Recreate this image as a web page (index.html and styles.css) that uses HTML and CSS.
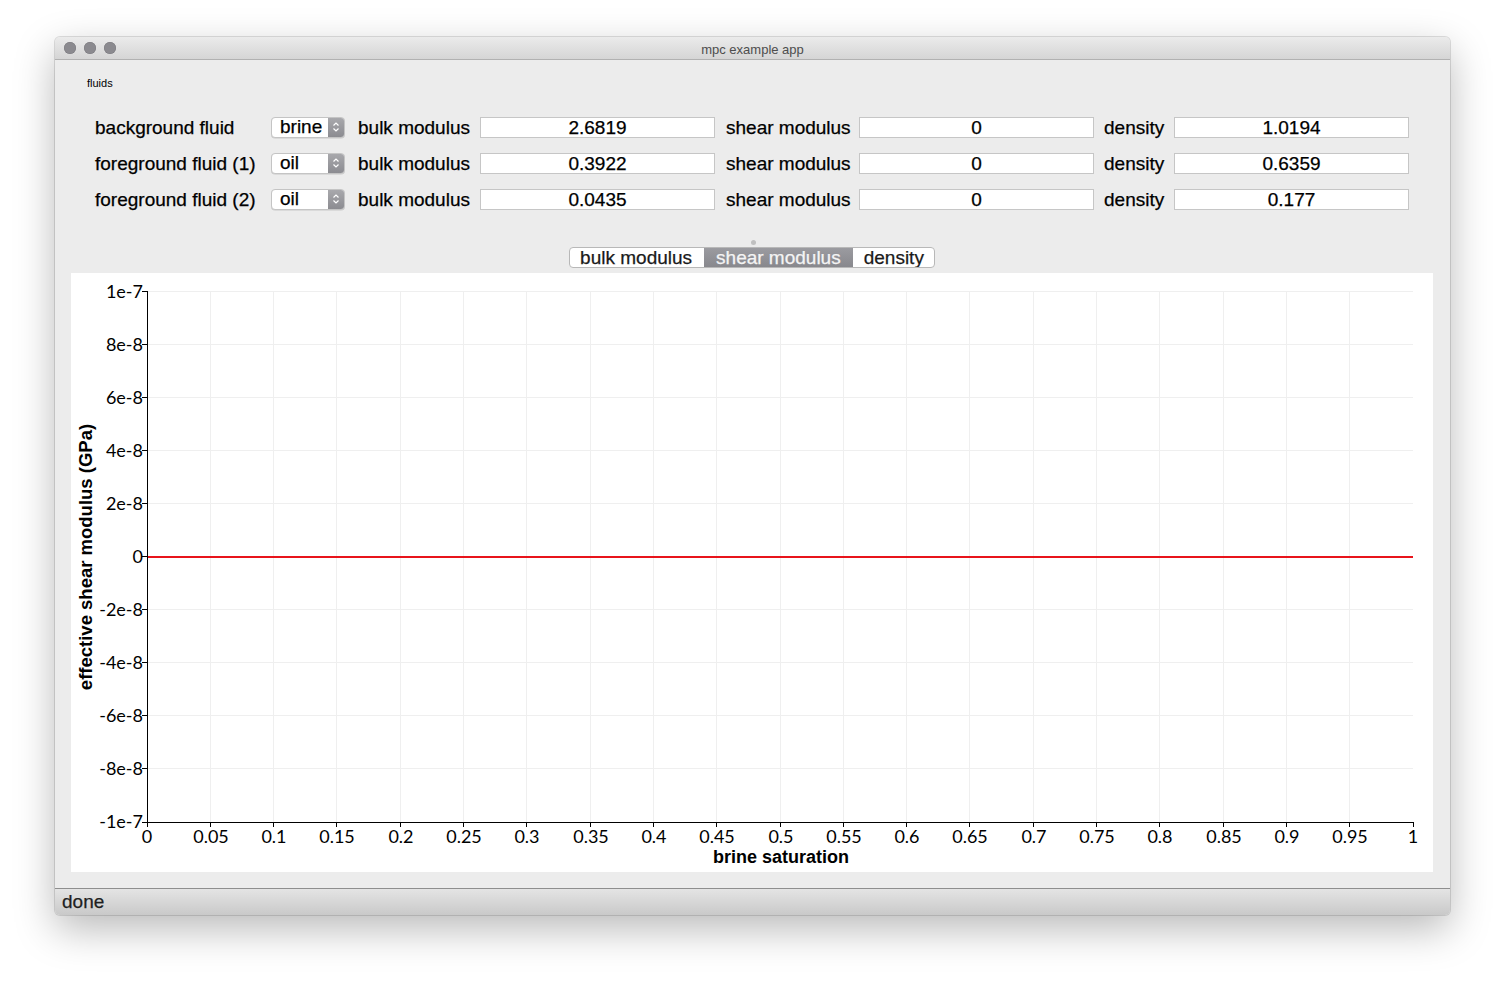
FILE: index.html
```html
<!DOCTYPE html>
<html>
<head>
<meta charset="utf-8">
<title>mpc example app</title>
<link rel="stylesheet" href="styles.css">
</head>
<body>
<div class="window">
  <div class="titlebar">
    <div class="lights"><span class="light"></span><span class="light"></span><span class="light"></span></div>
    <div class="title">mpc example app</div>
  </div>
  <div class="content">
    <div class="group-title">fluids</div>
    <div class="fluid-grid">
      <div class="lbl">background fluid</div>
      <div class="combo"><span class="combo-text">brine</span><span class="stepper"><svg width="8" height="12" viewBox="0 0 8 12"><path d="M1.5 4.5 L4 2 L6.5 4.5 M1.5 7.5 L4 10 L6.5 7.5" fill="none" stroke="#fff" stroke-width="1.2"/></svg></span></div>
      <div class="lbl pad-a">bulk modulus</div>
      <div class="field">2.6819</div>
      <div class="lbl pad-b">shear modulus</div>
      <div class="field">0</div>
      <div class="lbl pad-c">density</div>
      <div class="field">1.0194</div>

      <div class="lbl">foreground fluid (1)</div>
      <div class="combo"><span class="combo-text">oil</span><span class="stepper"><svg width="8" height="12" viewBox="0 0 8 12"><path d="M1.5 4.5 L4 2 L6.5 4.5 M1.5 7.5 L4 10 L6.5 7.5" fill="none" stroke="#fff" stroke-width="1.2"/></svg></span></div>
      <div class="lbl pad-a">bulk modulus</div>
      <div class="field">0.3922</div>
      <div class="lbl pad-b">shear modulus</div>
      <div class="field">0</div>
      <div class="lbl pad-c">density</div>
      <div class="field">0.6359</div>

      <div class="lbl">foreground fluid (2)</div>
      <div class="combo"><span class="combo-text">oil</span><span class="stepper"><svg width="8" height="12" viewBox="0 0 8 12"><path d="M1.5 4.5 L4 2 L6.5 4.5 M1.5 7.5 L4 10 L6.5 7.5" fill="none" stroke="#fff" stroke-width="1.2"/></svg></span></div>
      <div class="lbl pad-a">bulk modulus</div>
      <div class="field">0.0435</div>
      <div class="lbl pad-b">shear modulus</div>
      <div class="field">0</div>
      <div class="lbl pad-c">density</div>
      <div class="field">0.177</div>
    </div>

    <div class="splitter"><span class="handle"></span></div>
    <div class="tabs">
      <div class="tab first">bulk modulus</div>
      <div class="tab selected">shear modulus</div>
      <div class="tab">density</div>
    </div>

    <div class="plot">
      <svg class="chart" width="1362" height="599" viewBox="0 0 1362 599">
        <g class="grid" stroke="#efefef" stroke-width="1">
          <line x1="76" y1="18.5" x2="1342" y2="18.5"/>
          <line x1="76" y1="71.5" x2="1342" y2="71.5"/>
          <line x1="76" y1="124.5" x2="1342" y2="124.5"/>
          <line x1="76" y1="177.5" x2="1342" y2="177.5"/>
          <line x1="76" y1="230.5" x2="1342" y2="230.5"/>
          <line x1="76" y1="336.5" x2="1342" y2="336.5"/>
          <line x1="76" y1="389.5" x2="1342" y2="389.5"/>
          <line x1="76" y1="442.5" x2="1342" y2="442.5"/>
          <line x1="76" y1="495.5" x2="1342" y2="495.5"/>
          <line x1="139.5" y1="18" x2="139.5" y2="549"/>
          <line x1="202.5" y1="18" x2="202.5" y2="549"/>
          <line x1="265.5" y1="18" x2="265.5" y2="549"/>
          <line x1="329.5" y1="18" x2="329.5" y2="549"/>
          <line x1="392.5" y1="18" x2="392.5" y2="549"/>
          <line x1="455.5" y1="18" x2="455.5" y2="549"/>
          <line x1="519.5" y1="18" x2="519.5" y2="549"/>
          <line x1="582.5" y1="18" x2="582.5" y2="549"/>
          <line x1="645.5" y1="18" x2="645.5" y2="549"/>
          <line x1="709.5" y1="18" x2="709.5" y2="549"/>
          <line x1="772.5" y1="18" x2="772.5" y2="549"/>
          <line x1="835.5" y1="18" x2="835.5" y2="549"/>
          <line x1="898.5" y1="18" x2="898.5" y2="549"/>
          <line x1="962.5" y1="18" x2="962.5" y2="549"/>
          <line x1="1025.5" y1="18" x2="1025.5" y2="549"/>
          <line x1="1088.5" y1="18" x2="1088.5" y2="549"/>
          <line x1="1152.5" y1="18" x2="1152.5" y2="549"/>
          <line x1="1215.5" y1="18" x2="1215.5" y2="549"/>
          <line x1="1278.5" y1="18" x2="1278.5" y2="549"/>
        </g>
        <line x1="76" y1="284" x2="1342" y2="284" stroke="#e8141b" stroke-width="2"/>
        <g class="axes" stroke="#000" stroke-width="1">
          <line x1="76.5" y1="18" x2="76.5" y2="549.5"/>
          <line x1="76" y1="549.5" x2="1342.5" y2="549.5"/>
          <line x1="71" y1="18.5" x2="76" y2="18.5"/>
          <line x1="71" y1="71.5" x2="76" y2="71.5"/>
          <line x1="71" y1="124.5" x2="76" y2="124.5"/>
          <line x1="71" y1="177.5" x2="76" y2="177.5"/>
          <line x1="71" y1="230.5" x2="76" y2="230.5"/>
          <line x1="71" y1="283.5" x2="76" y2="283.5"/>
          <line x1="71" y1="336.5" x2="76" y2="336.5"/>
          <line x1="71" y1="389.5" x2="76" y2="389.5"/>
          <line x1="71" y1="442.5" x2="76" y2="442.5"/>
          <line x1="71" y1="495.5" x2="76" y2="495.5"/>
          <line x1="71" y1="549.5" x2="76" y2="549.5"/>
          <line x1="76.5" y1="549" x2="76.5" y2="554"/>
          <line x1="139.5" y1="549" x2="139.5" y2="554"/>
          <line x1="202.5" y1="549" x2="202.5" y2="554"/>
          <line x1="265.5" y1="549" x2="265.5" y2="554"/>
          <line x1="329.5" y1="549" x2="329.5" y2="554"/>
          <line x1="392.5" y1="549" x2="392.5" y2="554"/>
          <line x1="455.5" y1="549" x2="455.5" y2="554"/>
          <line x1="519.5" y1="549" x2="519.5" y2="554"/>
          <line x1="582.5" y1="549" x2="582.5" y2="554"/>
          <line x1="645.5" y1="549" x2="645.5" y2="554"/>
          <line x1="709.5" y1="549" x2="709.5" y2="554"/>
          <line x1="772.5" y1="549" x2="772.5" y2="554"/>
          <line x1="835.5" y1="549" x2="835.5" y2="554"/>
          <line x1="898.5" y1="549" x2="898.5" y2="554"/>
          <line x1="962.5" y1="549" x2="962.5" y2="554"/>
          <line x1="1025.5" y1="549" x2="1025.5" y2="554"/>
          <line x1="1088.5" y1="549" x2="1088.5" y2="554"/>
          <line x1="1152.5" y1="549" x2="1152.5" y2="554"/>
          <line x1="1215.5" y1="549" x2="1215.5" y2="554"/>
          <line x1="1278.5" y1="549" x2="1278.5" y2="554"/>
          <line x1="1342.5" y1="549" x2="1342.5" y2="554"/>
        </g>
        <g class="ylabels" text-anchor="end">
          <text x="72" y="25">1e-7</text>
          <text x="72" y="78">8e-8</text>
          <text x="72" y="131">6e-8</text>
          <text x="72" y="184">4e-8</text>
          <text x="72" y="237">2e-8</text>
          <text x="72" y="290">0</text>
          <text x="72" y="343">-2e-8</text>
          <text x="72" y="396">-4e-8</text>
          <text x="72" y="449">-6e-8</text>
          <text x="72" y="502">-8e-8</text>
          <text x="72" y="555">-1e-7</text>
        </g>
        <g class="xlabels" text-anchor="middle">
          <text x="76" y="570">0</text>
          <text x="140" y="570">0.05</text>
          <text x="203" y="570">0.1</text>
          <text x="266" y="570">0.15</text>
          <text x="330" y="570">0.2</text>
          <text x="393" y="570">0.25</text>
          <text x="456" y="570">0.3</text>
          <text x="520" y="570">0.35</text>
          <text x="583" y="570">0.4</text>
          <text x="646" y="570">0.45</text>
          <text x="710" y="570">0.5</text>
          <text x="773" y="570">0.55</text>
          <text x="836" y="570">0.6</text>
          <text x="899" y="570">0.65</text>
          <text x="963" y="570">0.7</text>
          <text x="1026" y="570">0.75</text>
          <text x="1089" y="570">0.8</text>
          <text x="1153" y="570">0.85</text>
          <text x="1216" y="570">0.9</text>
          <text x="1279" y="570">0.95</text>
          <text x="1342" y="570">1</text>
        </g>
        <text class="axis-title" x="710" y="590" text-anchor="middle">brine saturation</text>
        <text class="axis-title ytitle" x="0" y="0" text-anchor="middle" transform="translate(21 284) rotate(-90)">effective shear modulus (GPa)</text>
      </svg>
    </div>
  </div>
  <div class="statusbar">done</div>
</div>
</body>
</html>
```
FILE: styles.css
```css
html, body {
  margin: 0;
  padding: 0;
  background: #ffffff;
}
body {
  width: 1505px;
  height: 989px;
  overflow: hidden;
  font-family: "Liberation Sans", Arial, sans-serif;
  color: #000;
}
.window {
  margin: 37px 0 0 55px;
  width: 1395px;
  height: 878px;
  background: #ececec;
  border-radius: 5px;
  box-shadow: 0 0 0 1px rgba(0,0,0,0.12), 0 14px 40px rgba(0,0,0,0.28);
  display: flex;
  flex-direction: column;
  overflow: hidden;
}
.titlebar {
  height: 22px;
  flex: none;
  background: linear-gradient(#ebebeb, #d5d5d5);
  border-bottom: 1px solid #b1b1b1;
  display: flex;
  align-items: center;
  position: relative;
}
.lights {
  display: flex;
  gap: 8px;
  padding-left: 9px;
}
.light {
  width: 12px;
  height: 12px;
  border-radius: 50%;
  background: #8b8a8f;
  box-shadow: inset 0 0 0 0.5px #7a797e;
}
.title {
  position: absolute;
  left: 0;
  right: 0;
  text-align: center;
  font-size: 13px;
  color: #4d4d4d;
  top: 5px;
}
.content {
  flex: 1;
  display: flex;
  flex-direction: column;
  padding: 0 17px 0 16px;
}
.group-title {
  font-size: 11px;
  margin: 16px 0 0 16px;
  height: 14px;
  line-height: 14px;
}
.fluid-grid {
  margin: 19px 0 0 24px;
  display: grid;
  grid-template-columns: 176px 74px 135px 235px 144px 235px 80px 235px;
  grid-auto-rows: 36px;
  align-items: center;
}
.lbl, .field, .combo-text, .tab, .statusbar {
  -webkit-text-stroke: 0.25px currentColor;
}
.lbl {
  font-size: 19px;
  white-space: nowrap;
  line-height: 20px;
  padding-top: 2px;
}
.lbl.pad-a {
  padding-left: 13px;
}
.lbl.pad-b {
  padding-left: 11px;
}
.lbl.pad-c {
  padding-left: 10px;
}
.field {
  height: 19px;
  background: #fff;
  border: 1px solid #c6c6c6;
  font-size: 19px;
  line-height: 19px;
  text-align: center;
}
.combo {
  height: 19px;
  display: flex;
  border: 1px solid #c4c4c4;
  border-radius: 4px;
  background: #fff;
  overflow: hidden;
  box-shadow: 0 0.5px 0.5px rgba(0,0,0,0.15);
}
.combo-text {
  flex: 1;
  font-size: 19px;
  line-height: 18px;
  padding-left: 8px;
}
.stepper {
  width: 16px;
  background: linear-gradient(#a8a8ac, #8c8c91);
  display: flex;
  align-items: center;
  justify-content: center;
}
.splitter {
  height: 10px;
  margin-top: 20px;
  display: flex;
  justify-content: center;
  align-items: center;
}
.handle {
  width: 5px;
  height: 5px;
  border-radius: 50%;
  background: #c0c0c0;
  margin-left: 3px;
}
.tabs {
  align-self: center;
  display: flex;
  border: 1px solid #b8b8b8;
  border-radius: 4px;
  overflow: hidden;
  background: #fff;
  height: 19px;
}
.tab {
  font-size: 19px;
  line-height: 19px;
  padding: 0 10px 0 11px;
  color: #1a1a1a;
}
.tab.first {
  padding: 0 12px 0 10px;
}
.tab.selected {
  background: linear-gradient(#9b9ba0, #88888d);
  color: #f4f4f4;
  padding: 0 12px;
}
.plot {
  margin-top: 5px;
  height: 599px;
  background: #fff;
}
.chart {
  display: block;
}
.ylabels text, .xlabels text {
  font-family: "Lato", "DejaVu Sans", sans-serif;
  font-weight: 400;
  font-size: 18px;
  fill: #000;
}
.axis-title {
  font-family: "Liberation Sans", Arial, sans-serif;
  font-weight: bold;
  font-size: 18px;
  fill: #000;
}
.axis-title.ytitle {
  font-size: 18.5px;
}
.statusbar {
  flex: none;
  margin-top: 15px;
  height: 26px;
  border-top: 1px solid #8e8e8e;
  background: linear-gradient(#e4e4e4, #c9c9c9);
  font-size: 19px;
  line-height: 26px;
  padding-left: 7px;
  color: #1f1f1f;
}
```
